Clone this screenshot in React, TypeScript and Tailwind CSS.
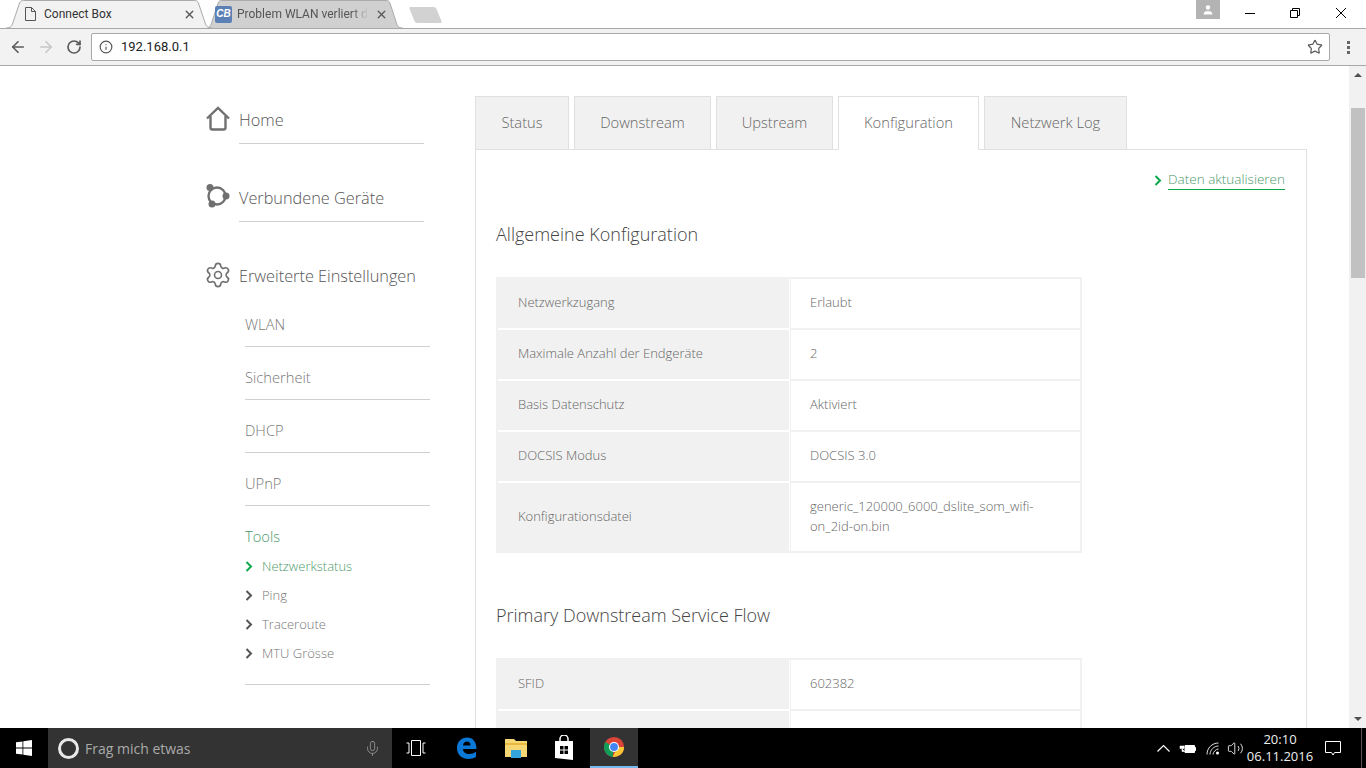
import { ArrowLeft, ArrowRight, Info, Mic, RotateCw, Settings, Star, Volume2, X } from 'lucide-react'

const pageFont = "font-['Open_Sans',sans-serif] font-light"

const configRows = [
    { label: 'Netzwerkzugang', value: 'Erlaubt' },
    { label: 'Maximale Anzahl der Endgeräte', value: '2' },
    { label: 'Basis Datenschutz', value: 'Aktiviert' },
    { label: 'DOCSIS Modus', value: 'DOCSIS 3.0' },
    { label: 'Konfigurationsdatei', value: 'generic_120000_6000_dslite_som_wifi-on_2id-on.bin', tall: true },
]

const flowRows = [
    { label: 'SFID', value: '602382' },
    { label: 'Max Traffic Rate', value: '126000000' },
]

const tabs = [
    { name: 'Status', width: 'w-[94px]' },
    { name: 'Downstream', width: 'w-[137px]' },
    { name: 'Upstream', width: 'w-[117px]' },
    { name: 'Konfiguration', width: 'w-[141px]', active: true },
    { name: 'Netzwerk Log', width: 'w-[143px]' },
]

function Chevron({ className }: { className: string }) {
    return (
        <svg width="8" height="11" viewBox="0 0 8 11" className={className}>
            <path d="M1.5 1l4.5 4.5L1.5 10" fill="none" stroke="currentColor" strokeWidth="2" />
        </svg>
    )
}

function BrowserTab({ title, active, icon, className }: { title: string; active?: boolean; icon: React.ReactNode; className: string }) {
    return (
        <div className={`relative h-[28px] shrink-0 -mr-[7px] ${active ? 'z-10' : ''} ${className}`}>
            <svg className="absolute inset-0 h-full w-full" viewBox="0 0 212 28" preserveAspectRatio="none">
                <path
                    d="M0 28 C5 28 6 26 7 23 L14 3 C15 1 16 0.5 18 0.5 L194 0.5 C196 0.5 197 1 198 3 L205 23 C206 26 207 28 212 28"
                    fill={active ? '#f2f2f2' : '#d0d0d0'}
                    stroke="#a8a8a8"
                />
            </svg>
            <div className="relative flex h-full w-full items-center">
                {icon}
                <span
                    className={`flex-1 whitespace-nowrap font-['Roboto',sans-serif] text-[12px] ${active ? 'text-[#333]' : 'text-[#555]'}`}
                >
                    {active ? title : <span className="inline-block [mask-image:linear-gradient(to_right,black_88%,transparent_100%)]">{title}</span>}
                </span>
                <X size={13} strokeWidth={2.5} className="shrink-0 text-[#5a5a5a]" />
            </div>
        </div>
    )
}

function ChromeBar() {
    return (
        <div className="shrink-0">
            <div className="relative flex h-[29px] items-start bg-white">
                <div className="absolute bottom-0 left-0 right-0 h-px bg-[#a8a8a8]" />
                <div className="relative flex pl-[6px]">
                    <BrowserTab
                        active
                        title="Connect Box"
                        className="w-[206px] pl-[19px] pr-[16px]"
                        icon={
                            <span className="flex w-[19px] shrink-0 items-center">
                                <svg width="11" height="14" viewBox="0 0 11 14" className="text-[#555]">
                                    <path d="M.5 .5h6l4 4v9h-10zM6.500 .5v4h4" fill="none" stroke="currentColor" />
                                </svg>
                            </span>
                        }
                    />
                    <BrowserTab
                        title="Problem WLAN verliert d"
                        className="w-[198px] pl-[10px] pr-[15px]"
                        icon={
                            <span className="mr-[5px] flex h-[17px] w-[17px] shrink-0 items-center justify-center rounded-[2px] bg-[#5b80b5] font-['Liberation_Sans',sans-serif] text-[10px] font-bold italic leading-none text-white">
                                CB
                            </span>
                        }
                    />
                    <div className="ml-[16px] mt-[7px] h-[16px] w-[27px] skew-x-[22deg] rounded-[2px] bg-[#d2d2d2]" />
                </div>
                <div className="ml-auto flex h-[19px] items-start pr-[2px]">
                    <div className="mr-[7px] flex h-[19px] w-[24px] items-center justify-center bg-[#b3b3b3]">
                        <svg width="12" height="10" viewBox="0 0 12 10">
                            <circle cx="6" cy="2.500" r="2.200" fill="white" />
                            <path d="M1.500 9.500c0-2.500 2-3.500 4.500-3.500s4.500 1 4.500 3.500z" fill="white" />
                        </svg>
                    </div>
                    <div className="flex w-[45px] justify-center pt-[13px]">
                        <div className="h-px w-[10px] bg-black" />
                    </div>
                    <div className="flex w-[46px] justify-center pt-[8px]">
                        <svg width="10" height="10" viewBox="0 0 10 10">
                            <path d="M.5 2.500h7v7h-7zM2.500 2.500v-2h7v7h-2" fill="none" stroke="black" />
                        </svg>
                    </div>
                    <div className="flex w-[46px] justify-center pt-[8px]">
                        <svg width="10" height="10" viewBox="0 0 10 10">
                            <path d="M0 0l10 10M10 0L0 10" stroke="black" />
                        </svg>
                    </div>
                </div>
            </div>
            <div className="flex h-[37px] items-center border-b border-[#a8a8a8] bg-[#f2f2f2] pl-[9px] pr-[16px]">
                <ArrowLeft size={18} strokeWidth={2.200} className="text-[#5a5a5a]" />
                <ArrowRight size={18} strokeWidth={2.200} className="ml-[10px] text-[#c8c8c8]" />
                <RotateCw size={16} strokeWidth={2.500} className="ml-[11px] text-[#5a5a5a]" />
                <div className="ml-[9px] flex h-[28px] flex-1 items-center rounded-[2px] border border-[#a9a9a9] bg-white pl-[7px] pr-[6px]">
                    <Info size={14} className="text-[#555]" />
                    <span className="ml-[8px] font-['Roboto',sans-serif] text-[13px] text-[#222]">192.168.0.1</span>
                    <Star size={16} strokeWidth={1.800} className="ml-auto text-[#5a5a5a]" />
                </div>
                <div className="ml-[17px] flex w-[3px] flex-col gap-[2px]">
                    <span className="h-[3px] w-[3px] bg-[#666]" />
                    <span className="h-[3px] w-[3px] bg-[#666]" />
                    <span className="h-[3px] w-[3px] bg-[#666]" />
                </div>
            </div>
        </div>
    )
}

function MainLink({ icon, label }: { icon: React.ReactNode; label: string }) {
    return (
        <div className="flex h-[78px]">
            <span className="w-[34px] shrink-0 pt-[10px]">{icon}</span>
            <div className="mr-[6px] h-[48px] flex-1 border-b border-[#d0d0d0]">
                <span className="block whitespace-nowrap pt-[12px] text-[16.3px] leading-[24px] text-[#555]">{label}</span>
            </div>
        </div>
    )
}

function Sidebar() {
    return (
        <div className={`ml-[205px] w-[225px] shrink-0 pt-[30px] ${pageFont}`}>
            <MainLink
                label="Home"
                icon={
                    <svg width="26" height="26" viewBox="0 0 26 26" fill="none" stroke="#707070" strokeWidth="2.400">
                        <path d="M2 12.500L13 2l11 10.500" />
                        <path d="M5.500 10v11.500q0 2 2 2h11q2 0 2-2V10" />
                    </svg>
                }
            />
            <MainLink
                label="Verbundene Geräte"
                icon={
                    <svg width="26" height="26" viewBox="0 0 26 26">
                        <circle cx="12" cy="12" r="8.500" fill="none" stroke="#707070" strokeWidth="2.400" />
                        <circle cx="5" cy="3.500" r="3.500" fill="#707070" />
                        <circle cx="21" cy="12" r="3.500" fill="#707070" />
                        <circle cx="7" cy="20" r="3.500" fill="#707070" />
                    </svg>
                }
            />
            <div className="flex h-[50px]">
                <span className="w-[34px] shrink-0 pt-[9px]">
                    <Settings size={28} strokeWidth={1.400} className="-ml-[1px] text-[#707070]" />
                </span>
                <span className="whitespace-nowrap pt-[12px] text-[16.3px] leading-[24px] text-[#555]">Erweiterte Einstellungen</span>
            </div>
            <div className="-mt-[8px] pl-[40px]">
                {['WLAN', 'Sicherheit', 'DHCP', 'UPnP'].map((item) => (
                    <div key={item} className="h-[53px] border-b border-[#d0d0d0] pt-[19px] text-[14.7px] leading-[22px] text-[#777]">
                        {item}
                    </div>
                ))}
                <div className="h-[179px] border-b border-[#d0d0d0] pt-[19px]">
                    <div className="text-[14.7px] leading-[22px] text-[#4d9a6b]">Tools</div>
                    <div className="mt-[5px] flex flex-col text-[13px] leading-[29px] text-[#777]">
                        <div className="flex items-center text-[#4d9a6b]">
                            <Chevron className="mr-[9px] text-[#0aa84f]" />
                            Netzwerkstatus
                        </div>
                        {['Ping', 'Traceroute', 'MTU Grösse'].map((item) => (
                            <div key={item} className="flex items-center">
                                <Chevron className="mr-[9px] text-[#555]" />
                                {item}
                            </div>
                        ))}
                    </div>
                </div>
            </div>
        </div>
    )
}

function InfoTable({ rows }: { rows: { label: string; value: string; tall?: boolean }[] }) {
    return (
        <div className="flex w-[586px] flex-col border-2 border-[#f1f1f1]">
            {rows.map((row, idx) => {
                const last = idx === rows.length - 1
                return (
                    <div key={row.label} className={`flex shrink-0 text-[13px] leading-[20px] text-[#666] ${row.tall ? 'h-[68px]' : last ? 'h-[49px]' : 'h-[51px]'}`}>
                        <div className={`w-[292px] border-r border-white ${last ? '' : 'border-b-2 border-b-white'}`}>
                            <div className="flex h-full items-center bg-[#f1f1f1] pb-[3px] pl-[20px]">{row.label}</div>
                        </div>
                        <div className={`flex flex-1 items-center border-l border-[#f1f1f1] pb-[3px] pl-[19px] pr-[19px] ${last ? '' : 'border-b-2 border-b-[#f1f1f1]'}`}>
                            {row.value}
                        </div>
                    </div>
                )
            })}
        </div>
    )
}

function Content() {
    return (
        <div className={`ml-[45px] w-[832px] shrink-0 pt-[30px] ${pageFont}`}>
            <div className="flex gap-[5px]">
                {tabs.map((tab) => (
                    <div
                        key={tab.name}
                        className={`-mb-px flex h-[54px] items-center justify-center border border-[#e0e0e0] pb-[2px] text-[14.7px] text-[#666] ${tab.width} ${tab.active ? 'border-b-white bg-white' : 'bg-[#f1f1f1]'}`}
                    >
                        {tab.name}
                    </div>
                ))}
            </div>
            <div className="h-[700px] border border-[#e0e0e0] px-[20px]">
                <div className="flex justify-end pr-[1px] pt-[20px] text-[13.5px] leading-[20px] text-[#4d9a6b]">
                    <Chevron className="mr-[6px] mt-[5px] text-[#0aa84f]" />
                    <span className="h-[20px] border-b border-[#0aa84f] leading-[18px]">Daten aktualisieren</span>
                </div>
                <h3 className="mt-[31px] text-[18px] leading-[26px] text-[#444]">Allgemeine Konfiguration</h3>
                <div className="mt-[30px]">
                    <InfoTable rows={configRows} />
                </div>
                <h3 className="mt-[49px] text-[18px] leading-[26px] text-[#444]">Primary Downstream Service Flow</h3>
                <div className="mt-[30px]">
                    <InfoTable rows={flowRows} />
                </div>
            </div>
        </div>
    )
}

function Scrollbar() {
    return (
        <div className="flex w-[17px] shrink-0 flex-col items-center bg-[#f1f1f1]">
            <div className="mt-[7px] h-0 w-0 border-x-[4px] border-b-[4px] border-x-transparent border-b-[#505050]" />
            <div className="mt-[31px] h-[170px] w-[14px] bg-[#c1c1c1]" />
            <div className="mb-[7px] mt-auto h-0 w-0 border-x-[4px] border-t-[4px] border-x-transparent border-t-[#505050]" />
        </div>
    )
}

function TaskBar() {
    return (
        <div className="flex h-[40px] shrink-0 items-center bg-black font-['Open_Sans',sans-serif] text-white">
            <div className="flex h-full w-[48px] items-center justify-center">
                <svg width="16" height="16" viewBox="0 0 16 16" fill="white">
                    <path d="M0 2.300l6.500-.9v6.200H0zM7.300 1.300L16 0v7.600H7.300zM0 8.400h6.500v6.200L0 13.700zM7.300 8.400H16V16l-8.700-1.300z" />
                </svg>
            </div>
            <div className="flex h-full w-[344px] items-center bg-[#333] pl-[10px] pr-[11px]">
                <span className="h-[21px] w-[21px] rounded-full border-[3px] border-[#e8e8e8]" />
                <span className="ml-[6px] text-[14px] text-[#aaa]">Frag mich etwas</span>
                <Mic size={17} strokeWidth={1.200} className="ml-auto text-[#999]" />
            </div>
            <div className="flex h-full w-[48px] items-center justify-center">
                <svg width="20" height="16" viewBox="0 0 20 16" fill="none" stroke="white">
                    <path d="M5.500 .5h9v15h-9zM.5 3h2.500v10H.5M19.500 3H17v10h2.500" />
                </svg>
            </div>
            <div className="flex h-full w-[53px] items-center justify-center">
                <svg width="21" height="22" viewBox="0 0 21 22">
                    <path d="M1 11C1 4 6 .5 11 .5c6 0 9.500 4.500 9.500 11.500H7c0 3.500 3 5 6 5 2.500 0 5-1 7-2.300v5.300c-2 1.200-5 2-8 2C6 21.500 1 18 1 11zM7 8.500h7.500C14.500 5.500 13 4.500 11 4.500S7.500 5.500 7 8.500z" fill="#0a78d7" fillRule="evenodd" />
                </svg>
            </div>
            <div className="flex h-full w-[45px] items-center justify-center">
                <svg width="22" height="20" viewBox="0 0 22 20">
                    <path d="M0 1h9l2 2h11v16H0z" fill="#f7d774" />
                    <path d="M0 5h22v2H0z" fill="#e8b93c" />
                    <path d="M6 12h10v8H6z" fill="#33a5dc" />
                </svg>
            </div>
            <div className="flex h-full w-[52px] items-center justify-center">
                <svg width="20" height="26" viewBox="0 0 20 26">
                    <path d="M6 7V4a4 4 0 018 0v3" fill="none" stroke="white" strokeWidth="1.500" />
                    <path d="M1 6h18v19L1 23z" fill="white" />
                    <path d="M6 11h3.500v3.500H6zM10.500 11H14v3.500h-3.500zM6 15.500h3.500V19H6zM10.500 15.500H14V19h-3.500z" fill="black" />
                </svg>
            </div>
            <div className="flex h-full w-[48px] items-center justify-center border-b-2 border-[#76b9ed] bg-[#333]">
                <svg width="22" height="22" viewBox="0 0 24 24">
                    <circle cx="12" cy="12" r="11" fill="#db4437" />
                    <path d="M12 12L2.500 6.500A11 11 0 001 12a11 11 0 009.500 10.900z" fill="#0f9d58" />
                    <path d="M12 12h11a11 11 0 01-12.500 10.900L15 14z" fill="#fcc934" />
                    <circle cx="12" cy="12" r="5.500" fill="white" />
                    <circle cx="12" cy="12" r="4.300" fill="#4285f4" />
                </svg>
            </div>
            <div className="ml-auto flex h-full items-center">
                <svg width="13" height="8" viewBox="0 0 13 8" fill="none" stroke="white" strokeWidth="1.200">
                    <path d="M.5 7.500l6-6 6 6" />
                </svg>
                <svg width="17" height="11" viewBox="0 0 17 11" className="ml-[9px]">
                    <path d="M6 2.500h9.500v7H6z" fill="white" stroke="white" />
                    <path d="M16 4.500h1v3h-1zM1 3h4v2.500H1zM3 5.500v3h3" fill="white" stroke="white" strokeWidth=".6" />
                </svg>
                <svg width="14" height="13" viewBox="0 0 14 13" fill="none" stroke="#ddd" className="ml-[10px]">
                    <path d="M1 12.500C1 6 6 1 12.500 1M4 12.500C4 8 8 4 12.500 4M7 12.500C7 10 10 7 12.500 7" />
                    <circle cx="11.500" cy="11" r="1.500" fill="white" stroke="none" />
                </svg>
                <Volume2 size={17} strokeWidth={1.200} className="ml-[7px] text-white" />
                <div className="flex w-[72px] flex-col items-center text-[13px] leading-[17px] text-[#eee]">
                    <span>20:10</span>
                    <span>06.11.2016</span>
                </div>
                <svg width="16" height="15" viewBox="0 0 16 15" fill="none" stroke="white" className="ml-[9px]">
                    <path d="M.5 .5h15v11H9.500L8 14l-1.500-2.500H.5z" />
                </svg>
                <div className="ml-[20px] h-full w-px bg-[#555]" />
                <div className="w-[4px]" />
            </div>
        </div>
    )
}

export default function App() {
    return (
        <div className="flex h-[768px] w-[1366px] flex-col overflow-hidden bg-white">
            <ChromeBar />
            <div className="flex min-h-0 flex-1">
                <div className="flex min-w-0 flex-1 overflow-hidden">
                    <Sidebar />
                    <Content />
                </div>
                <Scrollbar />
            </div>
            <TaskBar />
        </div>
    )
}
